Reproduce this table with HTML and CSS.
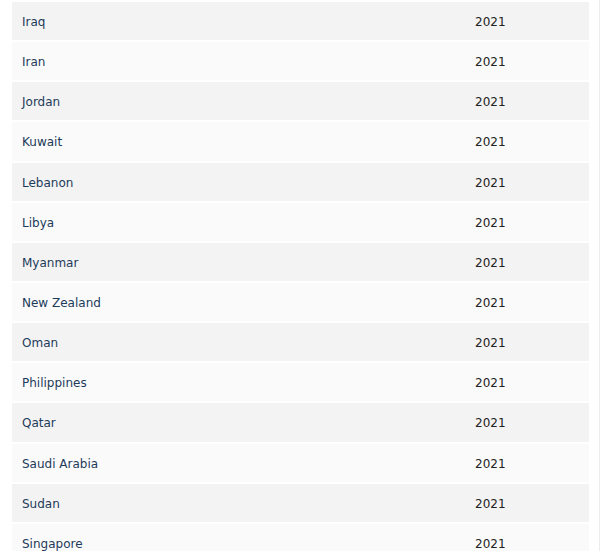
FILE: index.html
```html
<!DOCTYPE html>
<html>
<head>
<meta charset="utf-8">
<link rel="stylesheet" href="styles.css">
</head>
<body>
<div class="wrap">
<table class="list">
<tbody>
<tr><td class="name">Iraq</td><td class="year">2021</td></tr>
<tr><td class="name">Iran</td><td class="year">2021</td></tr>
<tr><td class="name">Jordan</td><td class="year">2021</td></tr>
<tr><td class="name">Kuwait</td><td class="year">2021</td></tr>
<tr><td class="name">Lebanon</td><td class="year">2021</td></tr>
<tr><td class="name">Libya</td><td class="year">2021</td></tr>
<tr><td class="name">Myanmar</td><td class="year">2021</td></tr>
<tr><td class="name">New Zealand</td><td class="year">2021</td></tr>
<tr><td class="name">Oman</td><td class="year">2021</td></tr>
<tr><td class="name">Philippines</td><td class="year">2021</td></tr>
<tr><td class="name">Qatar</td><td class="year">2021</td></tr>
<tr><td class="name">Saudi Arabia</td><td class="year">2021</td></tr>
<tr><td class="name">Sudan</td><td class="year">2021</td></tr>
<tr><td class="name">Singapore</td><td class="year">2021</td></tr>
</tbody>
</table>
</div>
</body>
</html>
```
FILE: styles.css
```css
html, body {
  margin: 0;
  padding: 0;
  background: #ffffff;
}
.wrap {
  padding-left: 12px;
  width: 587px;
  border-right: 1px solid #ececec;
  height: 551px;
  overflow: hidden;
  box-sizing: content-box;
}
.list {
  width: 577px;
  border-collapse: separate;
  border-spacing: 0 2px;
  margin-top: 0;
  font-family: "DejaVu Sans", Verdana, sans-serif;
  font-size: 12px;
  table-layout: fixed;
}
.list tr:nth-child(odd) td {
  background: #f3f3f3;
}
.list tr:nth-child(even) td {
  background: #fafafa;
}
.list td {
  height: 38.15px;
  padding: 2px 10px 0 10px;
  box-sizing: border-box;
  vertical-align: middle;
}
.name {
  width: 453px;
  color: #1d3b5a;
}
.year {
  color: #222222;
}
```
